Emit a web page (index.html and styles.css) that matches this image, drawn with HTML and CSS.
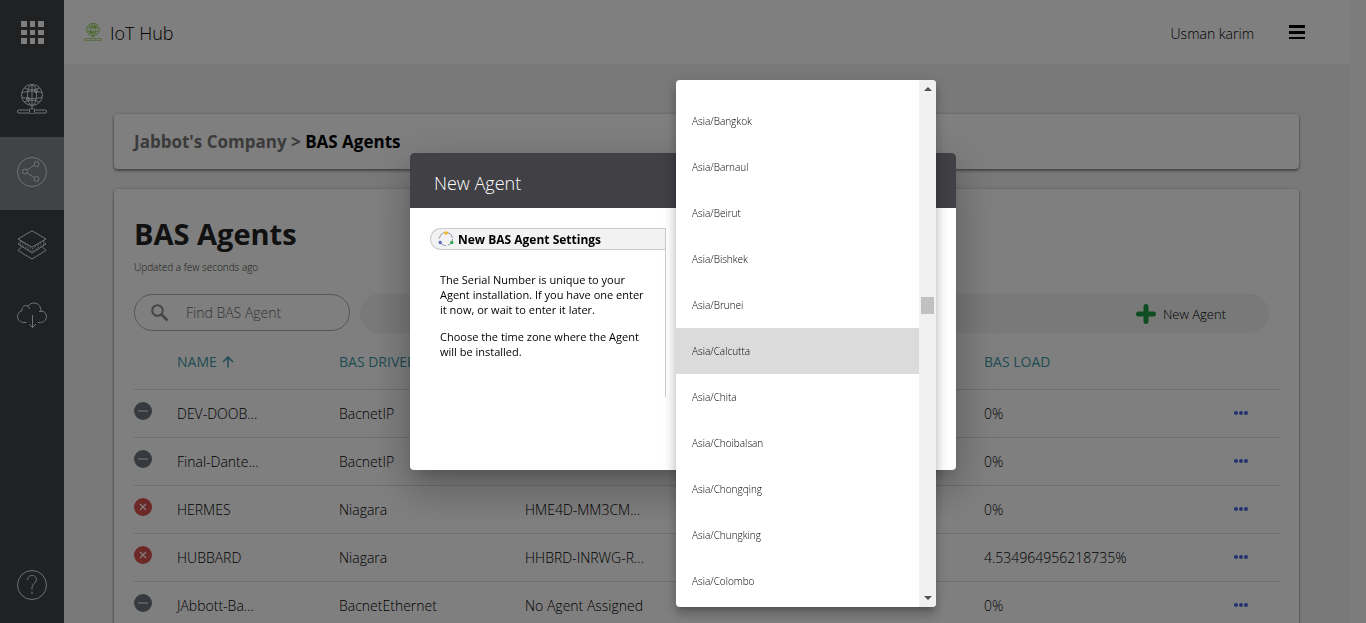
FILE: index.html
```
<!DOCTYPE html>
<html lang="en">
<head>
<meta charset="utf-8">
<title>IoT Hub</title>
<link rel="stylesheet" href="styles.css">
</head>
<body>
<svg class="defs" aria-hidden="true">
  <symbol id="globe" viewBox="0 0 30 30">
    <circle cx="15" cy="11" r="10.5"/><ellipse cx="15" cy="11" rx="4.5" ry="10.5"/>
    <path d="M15 .5v21M4.7 8.5Q15 5.500 25.300 8.500M4.700 13.500Q15 16.500 25.300 13.500M7.500 4Q15 8 22.500 4M7.500 18Q15 14 22.500 18M15 21.500v3.500M12 26H1.500Q.5 26 .5 27v1Q.5 29 1.500 29H12M18 26h10.500q1 0 1 1v1q0 1-1 1H18"/>
    <circle cx="19" cy="7" r="1.700"/><circle cx="11" cy="15" r="1.700"/><rect x="12.500" y="24.700" width="5" height="5" rx="1"/>
  </symbol>
  <symbol id="minus" viewBox="0 0 18 18"><circle cx="9" cy="9" r="9" fill="#6c757d"/><path d="M4 9h10" stroke="#b4bac0" stroke-width="2"/></symbol>
  <symbol id="cross" viewBox="0 0 18 18"><circle cx="9" cy="9" r="9" fill="#d9534f"/><path d="M6 6l6 6M12 6l-6 6" stroke="#fff" stroke-width="1.200"/></symbol>
  <symbol id="dots" viewBox="0 0 14 4"><circle cx="2" cy="2" r="2"/><circle cx="7" cy="2" r="2"/><circle cx="12" cy="2" r="2"/></symbol>
</svg>
<div class="app">
  <nav class="sidebar" aria-label="Main">
    <button class="nav-item apps" aria-label="Apps"><svg width="23" height="23" viewBox="0 0 23 23" fill="#fff"><path d="M0 0h6v6H0zM9 0h5v6H9zM17 0h6v6h-6zM0 9h6v5H0zM9 9h5v5H9zM17 9h6v5h-6zM0 17h6v6H0zM9 17h5v6H9zM17 17h6v6h-6z"/></svg></button>
    <button class="nav-item" aria-label="IoT Hub"><svg class="line" width="30" height="30"><use href="#globe"/></svg></button>
    <button class="nav-item active" aria-label="Agents"><svg class="line" width="30" height="30" viewBox="0 0 30 30"><circle cx="15" cy="15" r="14.500"/><circle cx="8" cy="14.500" r="2.500"/><circle cx="19.500" cy="7" r="2.500"/><circle cx="19.500" cy="22" r="2.500"/><path d="M10 13l7.500-4.800M10 16l7.500 4.500"/></svg></button>
    <button class="nav-item" aria-label="Layers"><svg class="line" width="30" height="30" viewBox="0 0 30 30"><path d="M15 .8L29 9 15 17.200 1 9zM4.500 11L1 14l14 9 14-9-3.500-3M4.500 17L1 20.500l14 8.500 14-8.500L25.500 17"/><path stroke-dasharray="1.500 1.500" d="M3 14l12 7.500L27 14M5 12.500l10 6.500 10-6.500"/></svg></button>
    <button class="nav-item cloud" aria-label="Download"><svg class="line" width="30" height="30" viewBox="0 0 30 30"><path d="M9.500 21.500H7C3.500 21.500.5 19 .5 15.500c0-3 2-5.200 4.500-5.700C4.700 6 7 4.500 9 4.500c1.500 0 3 1 3.500 3.500M11 5.500C12.500 3 14.500 2 17 2c4.500 0 7 3.500 7 8.500h-2M24 10c3 0 5.500 2 5.500 5.500s-3 6-6 6h-2.500M15.500 14v12.500M12 23l3.500 3.500L19 23"/></svg></button>
    <button class="nav-item help" aria-label="Help"><svg class="line" width="30" height="30" viewBox="0 0 30 30"><circle cx="15" cy="15" r="14.500"/><path d="M10.500 10c0-6 9-6 9-.5 0 4-4.500 4-4.500 8v2M15 21.500v2.500"/></svg></button>
  </nav>
  <div class="page">
    <header class="topbar">
      <svg class="brand-icon" width="18" height="18"><use href="#globe"/></svg>
      <span class="brand">IoT Hub</span>
      <span class="user">Usman karim</span>
      <button class="menu" aria-label="Menu"><svg width="16" height="14" viewBox="0 0 16 14"><path d="M0 0h16v3H0zM0 6h16v3H0zM0 12h16v2H0z"/></svg></button>
    </header>
    <main class="content">
      <div class="card crumbs"><a href="#company">Jabbot's Company &gt;</a> <span>BAS Agents</span></div>
      <section class="card agents">
        <h1>BAS Agents</h1>
        <p class="updated">Updated a few seconds ago</p>
        <div class="toolbar">
          <label class="search"><svg width="18" height="18" viewBox="0 0 18 18" fill="none" stroke="#8a8a8a" stroke-width="2"><circle cx="6.500" cy="6.500" r="5.300"/><path d="M10.500 10.500l6 6" stroke-width="2.500"/></svg><input type="text" placeholder="Find BAS Agent" aria-label="Find BAS Agent"></label>
          <div class="actions"><button class="add"><svg width="20" height="20" viewBox="0 0 20 20"><path d="M10 2.500v15M2.500 10h15" stroke="#1f9d45" stroke-width="5" stroke-linecap="round"/></svg>New Agent</button></div>
        </div>
        <table>
          <colgroup><col class="c-status"><col class="c-name"><col class="c-driver"><col class="c-serial"><col class="c-load"><col class="c-menu"></colgroup>
          <thead><tr><th></th><th>NAME <svg width="12" height="12" viewBox="0 0 12 12" fill="none" stroke="#3d98a6" stroke-width="1.500"><path d="M6 11.500V1.500M1 6l5-5 5 5"/></svg></th><th>BAS DRIVER</th><th></th><th>BAS LOAD</th><th></th></tr></thead>
          <tbody>
            <tr><td><svg class="status"><use href="#minus"/></svg></td><td>DEV-DOOB...</td><td>BacnetIP</td><td></td><td>0%</td><td><button class="more" aria-label="More"><svg><use href="#dots"/></svg></button></td></tr>
            <tr><td><svg class="status"><use href="#minus"/></svg></td><td>Final-Dante...</td><td>BacnetIP</td><td></td><td>0%</td><td><button class="more" aria-label="More"><svg><use href="#dots"/></svg></button></td></tr>
            <tr><td><svg class="status"><use href="#cross"/></svg></td><td>HERMES</td><td>Niagara</td><td>HME4D-MM3CM...</td><td>0%</td><td><button class="more" aria-label="More"><svg><use href="#dots"/></svg></button></td></tr>
            <tr><td><svg class="status"><use href="#cross"/></svg></td><td>HUBBARD</td><td>Niagara</td><td>HHBRD-INRWG-R...</td><td>4.534964956218735%</td><td><button class="more" aria-label="More"><svg><use href="#dots"/></svg></button></td></tr>
            <tr><td><svg class="status"><use href="#minus"/></svg></td><td>JAbbott-Ba...</td><td>BacnetEthernet</td><td>No Agent Assigned</td><td>0%</td><td><button class="more" aria-label="More"><svg><use href="#dots"/></svg></button></td></tr>
          </tbody>
        </table>
      </section>
    </main>
  </div>
  <div class="page-track"></div>
</div>
<div class="backdrop">
  <div class="dialog" role="dialog" aria-labelledby="dialog-title">
    <h2 id="dialog-title">New Agent</h2>
    <div class="dialog-body">
      <aside class="guide">
        <h3><svg width="16" height="16" viewBox="0 0 16 16"><circle cx="8" cy="8" r="6.500" fill="none" stroke="#8e95a5" stroke-dasharray="8 2.200"/><circle cx="8" cy="2" r="1.800" fill="#f4b919"/><circle cx="2.200" cy="11.500" r="1.700" fill="#5c6bc0"/><circle cx="13.800" cy="11.500" r="1.700" fill="#34a853"/></svg>New BAS Agent Settings</h3>
        <p>The Serial Number is unique to your Agent installation. If you have one enter it now, or wait to enter it later.</p>
        <p>Choose the time zone where the Agent will be installed.</p>
      </aside>
    </div>
    <div class="zone-panel">
      <div class="zones" role="listbox" aria-label="Time zone">
        <button role="option">Asia/Bangkok</button>
        <button role="option">Asia/Barnaul</button>
        <button role="option">Asia/Beirut</button>
        <button role="option">Asia/Bishkek</button>
        <button role="option">Asia/Brunei</button>
        <button role="option" class="selected" aria-selected="true">Asia/Calcutta</button>
        <button role="option">Asia/Chita</button>
        <button role="option">Asia/Choibalsan</button>
        <button role="option">Asia/Chongqing</button>
        <button role="option">Asia/Chungking</button>
        <button role="option">Asia/Colombo</button>
      </div>
      <div class="scrollbar"><i class="up"></i><i class="thumb"></i><i class="down"></i></div>
    </div>
  </div>
</div>
</body>
</html>
```

FILE: styles.css
```
* { box-sizing: border-box; }
body { margin: 0; font-family: "Open Sans", "Noto Sans", sans-serif; font-size: 14px; color: #111; overflow: hidden; }
button { border: 0; background: none; padding: 0; font: inherit; color: inherit; display: flex; align-items: center; cursor: pointer; }
h1, h2, h3, p { margin: 0; }
svg { flex: none; }
.defs { position: absolute; width: 0; height: 0; }
.app { display: flex; height: 100vh; overflow: hidden; font-weight: 300; color: #000; }
.sidebar { width: 64px; flex: none; display: flex; flex-direction: column; background: #404247; }
.nav-item { height: 73px; padding-bottom: 4px; justify-content: center; color: #e4e6ea; }
.nav-item.apps { height: 64px; padding: 1px 0 0 1px; }
.nav-item.active { background: #84868c; }
.nav-item.cloud { padding-bottom: 8px; }
.nav-item.help { margin-top: auto; height: 77px; padding: 0; }
.line, .brand-icon { fill: none; stroke: currentColor; stroke-width: 1; }
.page { flex: 1; min-width: 0; background: #f2f2f2; }
.page-track { width: 17px; flex: none; background: #f9f9f9; }
.topbar { height: 64px; padding: 0 44px 0 20px; display: flex; align-items: center; background: #fff; }
.brand-icon { color: #78c832; stroke-width: 1; margin-right: 8px; }
.brand { font-size: 18px; padding-top: 2px; }
.user { margin-left: auto; margin-right: 35px; padding-top: 2px; }
.content { padding: 50px; display: flex; flex-direction: column; gap: 20px; }
.card { background: #fff; border-radius: 4px; padding: 0 20px; box-shadow: 0 2px 3px rgba(0,0,0,.4), 0 0 3px rgba(0,0,0,.2); }
.crumbs { line-height: 55px; font-size: 17px; font-weight: 700; }
.crumbs a { color: #777; text-decoration: none; }
.agents { padding-top: 20px; padding-bottom: 20px; }
h1 { font-size: 29px; line-height: 50px; font-weight: 700; color: #222; }
.updated { font-size: 10px; line-height: 16px; color: #333; }
.toolbar { display: flex; gap: 10px; margin: 19px 10px 0 0; align-items: flex-start; }
.search { width: 216px; height: 37px; border: 1px solid #aaa; border-radius: 20px; display: flex; align-items: center; padding: 0 16px; gap: 15px; }
.search input { border: 0; outline: 0; width: 100%; min-width: 0; font: inherit; background: none; }
.search input::placeholder { color: #666; opacity: 1; }
.actions { flex: 1; height: 39px; border-radius: 20px; background: #f2f2f2; display: flex; justify-content: flex-end; padding-right: 43px; }
.add { gap: 7px; font-size: 13px; }
table { width: 100%; table-layout: fixed; border-collapse: collapse; margin-top: 8px; }
.c-status { width: 43px; }
.c-name { width: 162px; }
.c-driver { width: 186px; }
.c-serial { width: 459px; }
.c-menu { width: 45px; }
th, td { height: 48px; padding: 0; text-align: left; font-weight: 300; border-bottom: 1px solid #ddd; white-space: nowrap; }
th { padding-bottom: 7px; font-weight: 500; color: #3d98a6; }
th svg { margin-left: 2px; vertical-align: -1px; }
.status { display: block; width: 18px; height: 18px; margin-bottom: 4px; }
.more svg { width: 14px; height: 4px; fill: #4864e8; }
.backdrop { position: fixed; inset: 0; display: flex; align-items: center; justify-content: center; background: rgba(0,0,0,.5); }
.dialog { position: relative; width: 546px; background: #fff; border-radius: 4px; box-shadow: 0 11px 15px -7px rgba(0,0,0,.2), 0 24px 38px 3px rgba(0,0,0,.14), 0 9px 46px 8px rgba(0,0,0,.12); }
.dialog h2 { padding: 6px 24px 0; background: #404045; border-radius: 4px 4px 0 0; color: #fff; font-size: 18px; line-height: 49px; font-weight: 300; }
.dialog-body { padding: 20px 20px 73px; color: #000; }
.guide { width: 236px; min-height: 169px; border-right: 1px solid #ccc; font-size: 11px; line-height: 15px; }
.guide h3 { display: flex; align-items: center; gap: 4px; height: 22px; padding-left: 7px; margin-bottom: 22px; border: 1px solid #ccc; border-right: 0; border-radius: 11px 0 0 11px; background: #f2f2f2; font-size: 12px; font-weight: 700; }
.guide p { margin: 0 14px 12px 10px; }
.zone-panel { position: absolute; left: 266px; top: -73px; width: 260px; display: flex; background: #fff; border-radius: 4px; overflow: hidden; box-shadow: 0 5px 5px -3px rgba(0,0,0,.2), 0 8px 10px 1px rgba(0,0,0,.14), 0 3px 14px 2px rgba(0,0,0,.12); }
.zones { flex: 1; padding: 18px 0 3px; }
.zones button { width: 100%; height: 46px; padding: 0 16px; font-size: 10px; font-weight: 350; color: #000; }
.zones .selected { background: #dbdbdb; }
.scrollbar { width: 17px; display: flex; flex-direction: column; align-items: center; padding: 7px 0; background: #f1f1f1; }
.up, .down { border: 4px solid transparent; border-top: 0; border-bottom: 4px solid #505050; }
.down { border-bottom: 0; border-top: 4px solid #505050; margin-top: auto; }
.thumb { width: 13px; height: 17px; margin-top: 206px; background: #c1c1c1; }
```
